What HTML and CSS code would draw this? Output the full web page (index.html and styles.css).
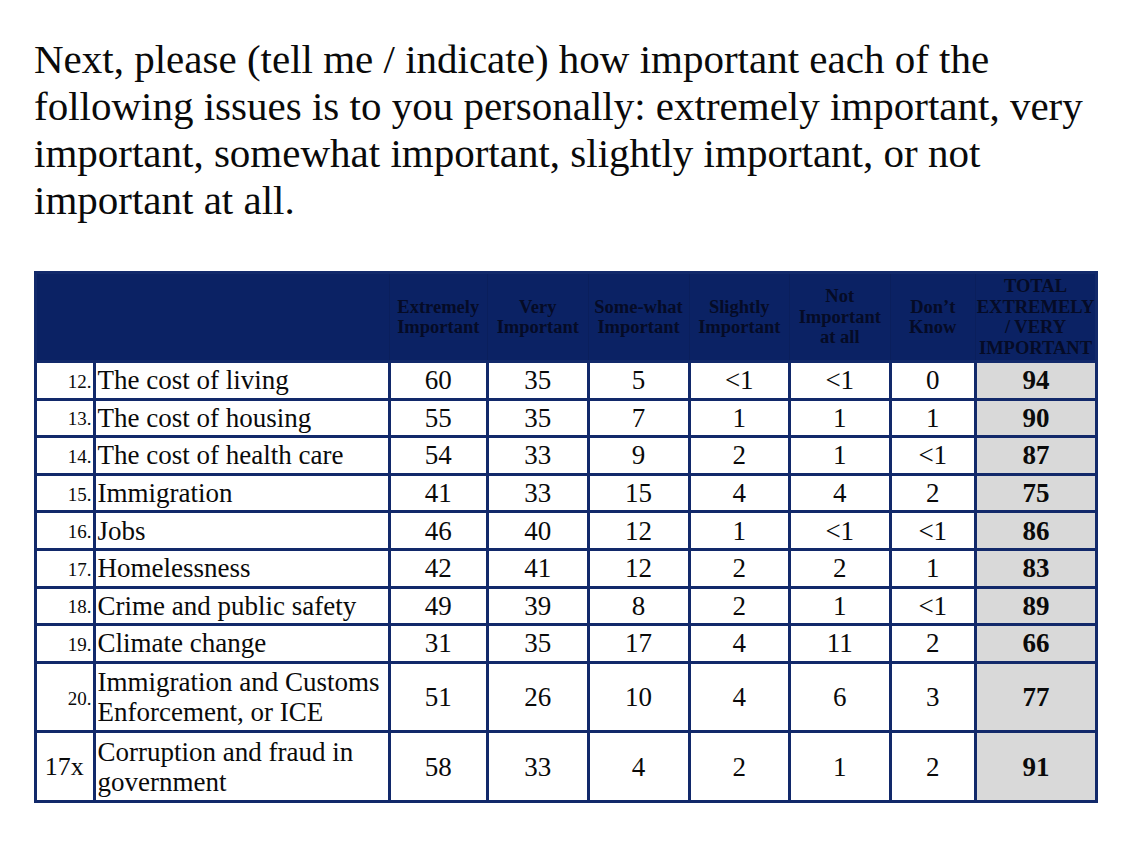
FILE: index.html
```html
<!DOCTYPE html>
<html lang="en">
<head>
<meta charset="utf-8">
<title>Issue importance</title>
<link rel="stylesheet" href="styles.css">
</head>
<body>
<div class="page">
  <p class="question">Next, please (tell me / indicate) how important each of the following issues is to you personally: extremely important, very important, somewhat important, slightly important, or not important at all.</p>
  <table class="grid">
    <colgroup>
      <col class="c-num"><col class="c-label"><col class="c-a"><col class="c-b"><col class="c-c"><col class="c-d"><col class="c-e"><col class="c-f"><col class="c-g">
    </colgroup>
    <thead>
      <tr>
        <th colspan="2" class="blank"></th>
        <th>Extremely<br>Important</th>
        <th>Very<br>Important</th>
        <th>Some-what<br>Important</th>
        <th>Slightly<br>Important</th>
        <th>Not<br>Important<br>at all</th>
        <th>Don’t<br>Know</th>
        <th>TOTAL<br>EXTREMELY<br>/ VERY<br>IMPORTANT</th>
      </tr>
    </thead>
    <tbody>
      <tr><td class="num"><span>12.</span></td><td class="label">The cost of living</td><td>60</td><td>35</td><td>5</td><td>&lt;1</td><td>&lt;1</td><td>0</td><td class="total">94</td></tr>
      <tr><td class="num"><span>13.</span></td><td class="label">The cost of housing</td><td>55</td><td>35</td><td>7</td><td>1</td><td>1</td><td>1</td><td class="total">90</td></tr>
      <tr><td class="num"><span>14.</span></td><td class="label">The cost of health care</td><td>54</td><td>33</td><td>9</td><td>2</td><td>1</td><td>&lt;1</td><td class="total">87</td></tr>
      <tr><td class="num"><span>15.</span></td><td class="label">Immigration</td><td>41</td><td>33</td><td>15</td><td>4</td><td>4</td><td>2</td><td class="total">75</td></tr>
      <tr><td class="num"><span>16.</span></td><td class="label">Jobs</td><td>46</td><td>40</td><td>12</td><td>1</td><td>&lt;1</td><td>&lt;1</td><td class="total">86</td></tr>
      <tr><td class="num"><span>17.</span></td><td class="label">Homelessness</td><td>42</td><td>41</td><td>12</td><td>2</td><td>2</td><td>1</td><td class="total">83</td></tr>
      <tr><td class="num"><span>18.</span></td><td class="label">Crime and public safety</td><td>49</td><td>39</td><td>8</td><td>2</td><td>1</td><td>&lt;1</td><td class="total">89</td></tr>
      <tr><td class="num"><span>19.</span></td><td class="label">Climate change</td><td>31</td><td>35</td><td>17</td><td>4</td><td>11</td><td>2</td><td class="total">66</td></tr>
      <tr class="tall"><td class="num"><span>20.</span></td><td class="label">Immigration and Customs<br>Enforcement, or ICE</td><td>51</td><td>26</td><td>10</td><td>4</td><td>6</td><td>3</td><td class="total">77</td></tr>
      <tr class="tall"><td class="num big">17x</td><td class="label">Corruption and fraud in<br>government</td><td>58</td><td>33</td><td>4</td><td>2</td><td>1</td><td>2</td><td class="total">91</td></tr>
    </tbody>
  </table>
</div>
</body>
</html>
```
FILE: styles.css
```css
html, body {
  margin: 0;
  padding: 0;
  background: #ffffff;
}

.page {
  padding: 36px 0 0 34px;
  font-family: "Liberation Serif", "Times New Roman", serif;
  color: #0a0a0a;
}

.question {
  margin: 0;
  width: 1085px;
  font-size: 41px;
  line-height: 47px;
}

.grid {
  margin-top: 47px;
  border-collapse: collapse;
  table-layout: fixed;
  width: 1062px;
  border: 3px solid #12296a;
}

.c-num { width: 58.5px; }
.c-label { width: 295px; }
.c-a { width: 98.5px; }
.c-b { width: 100.5px; }
.c-c { width: 101px; }
.c-d { width: 100.5px; }
.c-e { width: 100.5px; }
.c-f { width: 85.5px; }
.c-g { width: 121px; }

.grid th {
  background: #0b2264;
  color: #050b26;
  font-weight: bold;
  font-size: 18.5px;
  line-height: 20.5px;
  height: 86px;
  padding: 0;
  text-align: center;
  vertical-align: middle;
  white-space: nowrap;
  border: 1px solid #0a1f5c;
  border-bottom: 3px solid #12296a;
}

.grid td {
  border: 3px solid #12296a;
  font-size: 27px;
  line-height: 30px;
  height: 34.6px;
  padding: 0;
  text-align: center;
  vertical-align: middle;
}

.grid tr.tall td {
  height: 66.5px;
}

.grid td.num {
  text-align: right;
  padding-right: 1px;
}

.grid td.num span {
  font-size: 19px;
}

.grid td.num.big {
  font-size: 26px;
  text-align: center;
}

.grid td.label {
  text-align: left;
  padding-left: 2px;
}

.grid td.total {
  background: #d9d9d9;
  font-weight: bold;
}
```
